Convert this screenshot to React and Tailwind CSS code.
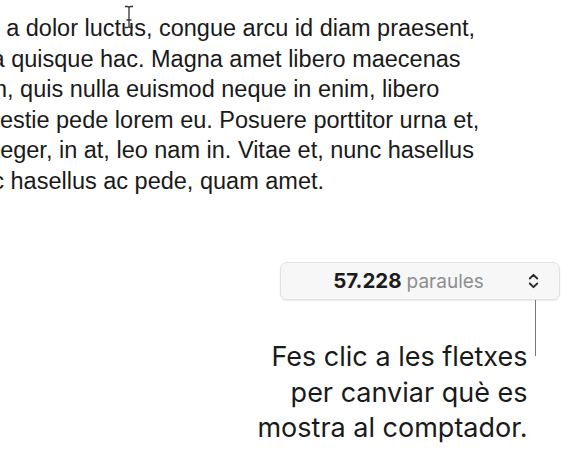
const lines = [
  { pre: "et", text: " a dolor luctus, congue arcu id diam praesent,", ml: "-ml-[20px]" },
  { pre: "nulla", text: " quisque hac. Magna amet libero maecenas", ml: "-ml-[45px]" },
  { pre: "Aenea", text: "n, quis nulla euismod neque in enim, libero", ml: "-ml-[74px]" },
  { pre: "mol", text: "estie pede lorem eu. Posuere porttitor urna et,", ml: "-ml-[38px]" },
  { pre: "Int", text: "eger, in at, leo nam in. Vitae et, nunc hasellus", ml: "-ml-[26px]" },
  { pre: "nunc", text: " hasellus ac pede, quam amet.", ml: "-ml-[47px]" },
];

function TextCursor() {
  // I-beam cursor sitting over "luctus"
  return (
    <svg
      className="absolute left-[124px] top-[5px]"
      width="10"
      height="24"
      viewBox="0 0 10 24"
    >
      <path
        d="M1 1.5h2.5c.9 0 1.5.6 1.5 1.5M9 1.5H6.5C5.6 1.5 5 2.1 5 3v18c0 .9-.6 1.5-1.5 1.5H1M9 22.5H6.5c-.9 0-1.5-.6-1.5-1.5M2.5 15h5"
        fill="none"
        stroke="#333"
        strokeWidth="1.3"
      />
    </svg>
  );
}

function UpDown() {
  return (
    <svg width="11" height="18" viewBox="0 0 11 18" className="mr-[20px] ml-[24px]">
      <path
        d="M1.8 6.5 5.5 2.8 9.2 6.5M1.8 11.5l3.7 3.7 3.7-3.7"
        fill="none"
        stroke="#2a2a2a"
        strokeWidth="1.9"
        strokeLinecap="round"
        strokeLinejoin="round"
      />
    </svg>
  );
}

export default function App() {
  return (
    <div className="relative h-[451px] w-[577px] overflow-hidden bg-white">
      <div
        className="relative pt-[13px] text-[23.5px] leading-[30.5px] text-[#1a1a1a]"
        style={{ fontFamily: '"Liberation Sans", Arial, sans-serif' }}
      >
        {lines.map((l, i) => (
          <div key={i} className={`whitespace-nowrap ${l.ml}`}>
            {l.pre}
            {l.text}
          </div>
        ))}
        <TextCursor />
      </div>

      <div
        className="mt-[66px] flex flex-col items-end pr-[17px]"
        style={{ fontFamily: 'Inter, "Noto Sans", sans-serif' }}
      >
        <div className="flex h-[38px] w-[280px] items-center rounded-[7px] border border-[#e2e2e2] bg-[#f7f7f7] shadow-[0_1px_2px_rgba(0,0,0,0.08)]">
          <div className="flex flex-1 items-baseline justify-center pl-[32px]">
            <span className="text-[20.5px] font-bold text-[#1c1c1c]">57.228</span>
            <span className="ml-[5px] text-[19px] text-[#8e8e8e]">paraules</span>
          </div>
          <UpDown />
        </div>
        <div className="flex items-start pr-[24px]">
          <div className="mt-[39px] mr-[7px] text-right text-[27px] leading-[35.5px] text-[#1a1a1a]">
            Fes clic a les fletxes
            <br />
            per canviar què es
            <br />
            mostra al comptador.
          </div>
          <div className="h-[56px] w-[1.5px] bg-[#777]" />
        </div>
      </div>
    </div>
  );
}
